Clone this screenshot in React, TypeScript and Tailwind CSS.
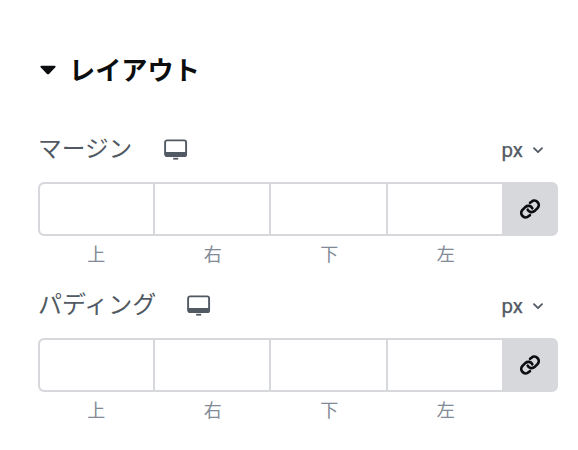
const sides = ["上", "右", "下", "左"];

function DesktopIcon() {
  return (
    <svg className="h-[21px] w-6" viewBox="0 0 24 21" fill="none">
      <rect x="1.1" y="1.4" width="21" height="15.6" rx="2" stroke="#515962" strokeWidth="1.9" />
      <path d="M.8 13h22v2.9a2 2 0 0 1-2 2h-18a2 2 0 0 1-2-2z" fill="#515962" />
      <path d="M9.2 19.7h5" stroke="#515962" strokeWidth="1.8" />
    </svg>
  );
}

function LinkIcon() {
  return (
    <svg
      className="size-[22px]"
      viewBox="0 0 22 22"
      fill="none"
      stroke="#0c0d0e"
      strokeWidth="2.7"
      strokeLinecap="round"
    >
      <path d="M8.7 11.7a4.3 4.3 0 0 0 6.8 1.4l3.2-3.2a4.4 4.4 0 0 0-6.2-6.2l-1.4 1.1" />
      <path d="M13.3 10.3a4.3 4.3 0 0 0-6.8-1.4l-3.2 3.2a4.4 4.4 0 0 0 6.2 6.2l1.4-1.1" />
    </svg>
  );
}

function Dimensions({
  label,
  labelWidth,
  labelText,
}: {
  label: string;
  labelWidth: string;
  labelText: string;
}) {
  return (
    <section className="h-[156px]">
      <div className="flex h-[52px] items-start">
        <h3 className={`${labelWidth} ${labelText} -mt-px leading-9 whitespace-nowrap text-[#515962]`}>{label}</h3>
        <div className="pt-[9px]">
          <DesktopIcon />
        </div>
        <div className="mr-[15px] ml-auto flex items-center gap-[10px] pt-[7px] text-[#515962]">
          <span className="font-[Roboto,sans-serif] text-[20.5px] leading-[26px] [-webkit-text-stroke:0.25px_#515962]">
            px
          </span>
          <svg className="h-[7px] w-[10px]" viewBox="0 0 10 7" fill="none">
            <path d="M1 1.2l4 4 4-4" stroke="#515962" strokeWidth="1.8" strokeLinecap="round" strokeLinejoin="round" />
          </svg>
        </div>
      </div>
      <div className="flex h-[54px] overflow-hidden rounded-[6px] border-2 border-[#d6d8dc] bg-[#d6d8dc]">
        <div className="grid w-[462px] grid-cols-[113px_114px_115px_114px] gap-[2px]">
          {sides.map((side) => (
            <input key={side} aria-label={side} className="min-w-0 bg-white first:rounded-l-[4px]" />
          ))}
        </div>
        <button className="flex flex-1 items-center justify-center pl-[2px]" aria-label={label}>
          <LinkIcon />
        </button>
      </div>
      <div className="grid w-[466px] grid-cols-4 pt-[3px] text-center text-[18px] leading-[28px] text-[#818a96]">
        {sides.map((side) => (
          <span key={side}>{side}</span>
        ))}
      </div>
    </section>
  );
}

export default function App() {
  return (
    <main className="h-[450px] w-[578px] bg-white pr-5 pl-[38px] font-['Noto_Sans_CJK_JP',sans-serif]">
      <header className="flex h-[130px] items-start pt-[49px]">
        <svg className="mt-4 ml-[2px] h-[10px] w-4" viewBox="0 0 16 10">
          <path d="M1 .8h14q1 .4.3 1.4L9 8.9q-1 .8-2 0L.7 2.2Q0 1.2 1 .8z" fill="#0c0d0e" />
        </svg>
        <h2 className="ml-[13px] text-[26.2px] leading-10 font-bold text-[#0c0d0e]">レイアウト</h2>
      </header>
      <Dimensions label="マージン" labelWidth="w-[126px]" labelText="text-[23.7px]" />
      <Dimensions label="パディング" labelWidth="w-[149px]" labelText="text-[24px]" />
    </main>
  );
}
